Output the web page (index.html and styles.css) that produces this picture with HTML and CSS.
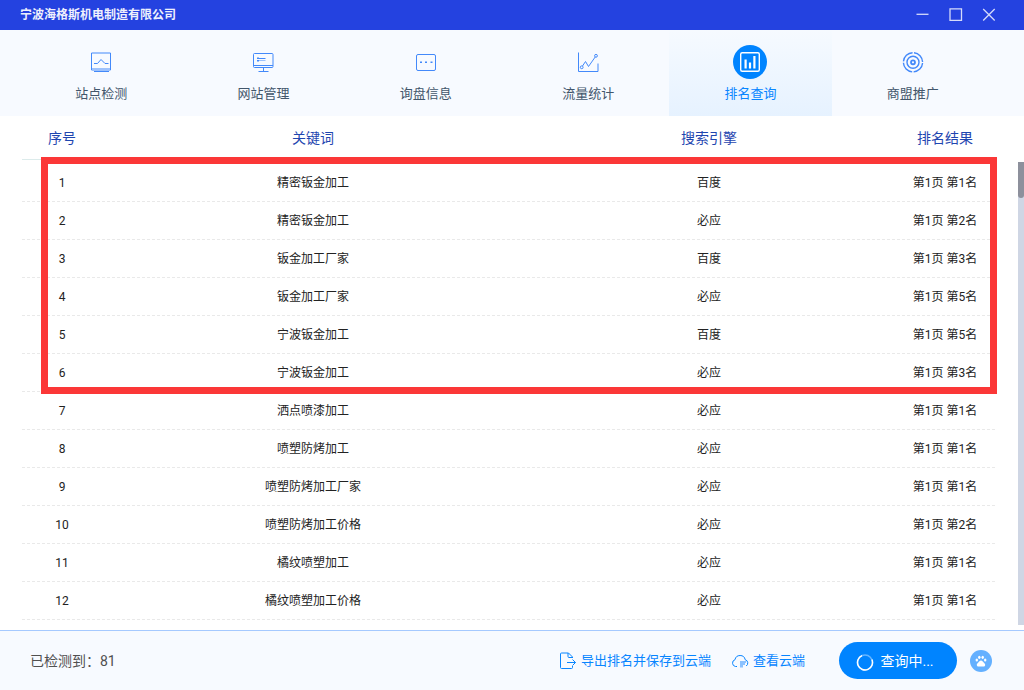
FILE: index.html
```html
<!DOCTYPE html>
<html lang="zh-CN">
<head>
<meta charset="utf-8">
<meta name="viewport" content="width=device-width, initial-scale=1">
<title>排名查询</title>
<link rel="stylesheet" href="styles.css">
</head>
<body>
<div class="app">
  <header class="titlebar">
    <h1 class="company">宁波海格斯机电制造有限公司</h1>
    <div class="window-controls">
      <button type="button" class="window-btn" aria-label="最小化"><svg width="14" height="14" viewBox="0 0 14 14"><path d="M.5 6.300h12"/></svg></button>
      <button type="button" class="window-btn" aria-label="最大化"><svg width="14" height="14" viewBox="0 0 14 14"><path d="M1 .8h11.500v11.500H1z"/></svg></button>
      <button type="button" class="window-btn" aria-label="关闭"><svg width="14" height="14" viewBox="0 0 14 14"><path d="M1.200 1l11.500 11.500M12.700 1L1.200 12.500"/></svg></button>
    </div>
  </header>

  <nav class="tabs">
    <a class="tab" href="#site"><span class="tab-icon"><svg width="22" height="22" viewBox="0 0 22 22"><path d="M1.500 2v17h19V2z"/><path class="soft" d="M2 17.500h18"/><path d="M4 20.500h15"/><path d="M4 12.500h3.500l3.500-4 4 4h3.500"/></svg></span>站点检测</a>
    <a class="tab" href="#manage"><span class="tab-icon"><svg width="22" height="22" viewBox="0 0 22 22"><rect x="1.500" y="2.500" width="19.500" height="14" rx="1"/><path d="M1.500 14.500h19.500M11.500 17v3M6.500 20.500h10M7 7.500h6.500"/><path class="soft" d="M7 9.500h6.500"/><path class="fill" d="M5 6.500h2V8H5zM5 9h2v1.500H5z"/></svg></span>网站管理</a>
    <a class="tab" href="#inquiry"><span class="tab-icon"><svg width="22" height="22" viewBox="0 0 22 22"><rect x="1.500" y="3.500" width="19" height="16" rx="1.500"/><path class="fill" d="M5 10.500h2V12H5zM10 10.500h2V12h-2zM15.500 10.500h2V12h-2z"/></svg></span>询盘信息</a>
    <a class="tab" href="#traffic"><span class="tab-icon"><svg width="22" height="22" viewBox="0 0 22 22"><path d="M1.500 1.500v19H21V12.500"/><circle cx="4.700" cy="16.300" r="1.400"/><circle cx="19" cy="4.800" r="1.400"/><path d="M5.500 15L8.500 10.500l3 5 6.700-9.500"/></svg></span>流量统计</a>
    <a class="tab tab-active" href="#ranking" aria-current="page"><span class="tab-icon tab-icon-round"><svg width="22" height="22" viewBox="0 0 22 22"><rect x="1.700" y="1.700" width="18.600" height="18.600" rx="1.500" stroke-width="1.400"/><path stroke-width="2.200" d="M6.600 8.500v9M11 11.500v6M15.400 5v12.500"/></svg></span>排名查询</a>
    <a class="tab" href="#alliance"><span class="tab-icon"><svg width="22" height="22" viewBox="0 0 22 22"><circle cx="11" cy="11.300" r="9.600" stroke-width="1.400" stroke-dasharray="13.600 1.480" stroke-dashoffset="-0.740"/><circle cx="11" cy="11.300" r="6" stroke-width="1.400"/><circle cx="11" cy="11.300" r="2" stroke-width="1.800"/></svg></span>商盟推广</a>
  </nav>

  <main class="results">
    <table class="rank-table">
      <thead>
        <tr><th class="col-no" scope="col">序号</th><th scope="col">关键词</th><th class="col-engine" scope="col">搜索引擎</th><th class="col-rank" scope="col">排名结果</th></tr>
      </thead>
      <tbody>
        <tr><td>1</td><td>精密钣金加工</td><td>百度</td><td>第1页 第1名</td></tr>
        <tr><td>2</td><td>精密钣金加工</td><td>必应</td><td>第1页 第2名</td></tr>
        <tr><td>3</td><td>钣金加工厂家</td><td>百度</td><td>第1页 第3名</td></tr>
        <tr><td>4</td><td>钣金加工厂家</td><td>必应</td><td>第1页 第5名</td></tr>
        <tr><td>5</td><td>宁波钣金加工</td><td>百度</td><td>第1页 第5名</td></tr>
        <tr><td>6</td><td>宁波钣金加工</td><td>必应</td><td>第1页 第3名</td></tr>
        <tr><td>7</td><td>洒点喷漆加工</td><td>必应</td><td>第1页 第1名</td></tr>
        <tr><td>8</td><td>喷塑防烤加工</td><td>必应</td><td>第1页 第1名</td></tr>
        <tr><td>9</td><td>喷塑防烤加工厂家</td><td>必应</td><td>第1页 第1名</td></tr>
        <tr><td>10</td><td>喷塑防烤加工价格</td><td>必应</td><td>第1页 第2名</td></tr>
        <tr><td>11</td><td>橘纹喷塑加工</td><td>必应</td><td>第1页 第1名</td></tr>
        <tr><td>12</td><td>橘纹喷塑加工价格</td><td>必应</td><td>第1页 第1名</td></tr>
      </tbody>
    </table>
    <div class="scrollbar"><div class="scroll-thumb"></div></div>
    <div class="highlight"></div>
  </main>

  <footer class="statusbar">
    <p class="count">已检测到：81</p>
    <a class="action" href="#export"><svg width="18" height="18" viewBox="0 0 18 18"><path d="M13.500 6V5L9.500 1H2.500q-1 0-1 1v13.500q0 1 1 1h10q1 0 1-1V14M9 1v3.500q0 1 1 1h3.500M8 10.500h8.500M13.500 7.500l3 3-3 3"/></svg>导出排名并保存到云端</a>
    <a class="action" href="#cloud"><svg width="18" height="18" viewBox="0 0 18 18"><path d="M6 14.500H4.500a3.500 3.500 0 0 1-.5-6.800 5.200 5.200 0 0 1 10.200 0 3.500 3.500 0 0 1 1 6.300"/><path class="pale" d="M9 9h6v2H9zM9 11h5v2H9zM9 13h3v2.500H9z"/></svg>查看云端</a>
    <button type="button" class="query-btn"><svg width="18" height="20" viewBox="0 0 18 20"><circle class="ring" cx="9" cy="11.500" r="7.500"/><path d="M6 4.600A7.500 7.500 0 1 0 15.900 8.500"/></svg>查询中...</button>
    <button type="button" class="paw-btn" aria-label="百度"><svg width="14" height="14" viewBox="0 0 14 14"><ellipse cx="2.800" cy="5.900" rx="1.200" ry="1.500"/><ellipse cx="5.300" cy="3.300" rx="1.200" ry="1.600"/><ellipse cx="8.700" cy="3.300" rx="1.200" ry="1.600"/><ellipse cx="11.200" cy="5.900" rx="1.200" ry="1.500"/><path d="M7 6.500c1.300 0 1.800 1.100 2.700 2 .9.900 1.800 1.500 1.400 2.900-.5 1.400-1.800 1.100-4.100 1.100s-3.600.3-4.100-1.100C2.500 10 3.400 9.400 4.300 8.500c.9-.9 1.400-2 2.700-2z"/></svg></button>
  </footer>
</div>
</body>
</html>
```
FILE: styles.css
```css
* {
  box-sizing: border-box;
}

body {
  margin: 0;
  background: #fff;
  color: #222;
  font-family: Roboto, "Noto Sans CJK SC", sans-serif;
  font-size: 12px;
  line-height: 18px;
}

button {
  padding: 0;
  border: 0;
  background: none;
  font: inherit;
  cursor: pointer;
}

a {
  text-decoration: none;
}

svg {
  display: block;
  flex: none;
  fill: none;
  stroke: currentColor;
}

.app {
  display: flex;
  flex-direction: column;
  min-height: 100vh;
}

.titlebar {
  display: flex;
  align-items: center;
  justify-content: space-between;
  height: 30px;
  padding: 0 28px 0 20px;
  background: #2442e0;
  color: #fff;
}

.company {
  margin: 0;
  color: #eef0fd;
  font-size: 12px;
  font-weight: 700;
  line-height: 20px;
}

.window-controls {
  display: flex;
  gap: 19px;
}

.window-btn {
  color: #d5dbfa;
}

.window-btn svg {
  stroke-width: 1.3;
}

.tabs {
  display: grid;
  grid-template-columns: repeat(6, 1fr);
  height: 86px;
  padding: 0 30px 0 20px;
  background: #f7faff;
}

.tab {
  display: flex;
  flex-direction: column;
  align-items: center;
  gap: 5px;
  padding-top: 15px;
  color: #42566b;
  font-size: 13px;
  line-height: 20px;
}

.tab-icon {
  display: flex;
  align-items: center;
  justify-content: center;
  width: 34px;
  height: 34px;
  color: #4389fa;
}

.tab-icon .soft {
  opacity: 0.5;
}

.tab-icon .fill {
  fill: currentColor;
  stroke: none;
}

.tab-active {
  background: linear-gradient(#f6faff, #e6f2ff);
  color: #0885ff;
}

.tab-icon-round {
  border-radius: 50%;
  background: #0084ff;
  color: #fff;
}

.results {
  position: relative;
  display: flex;
  flex: 1;
  justify-content: space-between;
  padding-left: 22px;
}

.rank-table {
  flex: 1;
  align-self: flex-start;
  width: 100%;
  margin-right: 22px;
  border-spacing: 0;
  table-layout: fixed;
  text-align: center;
}

.rank-table th {
  height: 44px;
  padding: 0;
  border-bottom: 1px solid #dcebeb;
  color: #1f46b0;
  font-size: 14px;
  font-weight: 400;
}

.rank-table tbody::before {
  content: "";
  display: block;
  height: 4px;
}

.rank-table tbody tr {
  background: repeating-linear-gradient(90deg, #e9e9e9 0 3px, transparent 3px 5px) bottom / 100% 1px no-repeat;
}

.rank-table td {
  height: 38px;
  padding: 0;
}

.col-no {
  width: 80px;
}

.col-engine {
  width: 38%;
}

.col-rank {
  width: 102px;
}

.scrollbar {
  width: 6px;
  margin: 46px 0 5px;
  background: #cfd6e4;
}

.scroll-thumb {
  height: 36px;
  border-radius: 0 0 3px 3px;
  background: #8d909c;
}

.highlight {
  position: absolute;
  top: 41px;
  right: 27px;
  left: 41px;
  height: 237px;
  border: 7px solid #fb3737;
  pointer-events: none;
}

.statusbar {
  display: flex;
  align-items: center;
  height: 60px;
  padding: 0 32px 0 30px;
  border-top: 1px solid #a5c9ff;
  background: #f7faff;
}

.count {
  margin: 0 auto 0 0;
  color: #505050;
  font-size: 14px;
}

.action {
  display: flex;
  align-items: center;
  gap: 4px;
  margin-right: 20px;
  color: #0885ff;
  font-size: 13px;
}

.action .pale {
  fill: #8cc2ff;
  stroke: none;
}

.query-btn {
  display: flex;
  align-items: center;
  justify-content: center;
  gap: 6px;
  width: 118px;
  height: 37px;
  margin: 0 13px 0 14px;
  padding-right: 6px;
  border-radius: 19px;
  background: #0084ff;
  color: #fff;
  font-size: 14px;
}

.query-btn svg {
  stroke-width: 1.5;
}

.query-btn .ring {
  opacity: 0.4;
}

.paw-btn {
  display: flex;
  align-items: center;
  justify-content: center;
  width: 22px;
  height: 22px;
  border-radius: 50%;
  background: #64b0ff;
  color: #fff;
}

.paw-btn svg {
  fill: currentColor;
  stroke: none;
}
```
